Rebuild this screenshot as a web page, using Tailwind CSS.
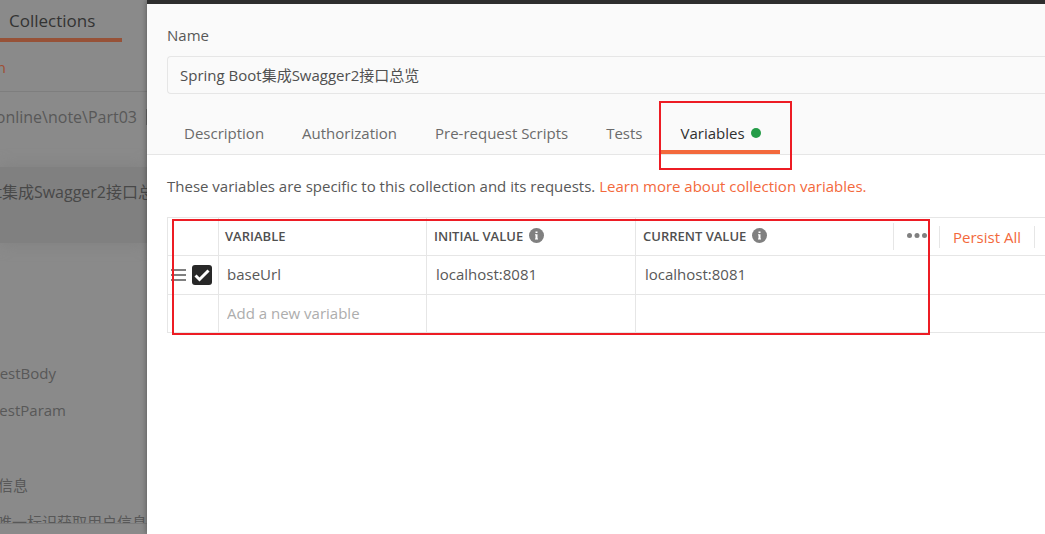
<!DOCTYPE html>
<html lang="en">
<head>
<meta charset="utf-8">
<title>Edit Collection</title>
<script src="https://cdn.jsdelivr.net/npm/@tailwindcss/browser@4"></script>
</head>
<body class="flex min-h-screen overflow-hidden bg-white font-['Open_Sans','Noto_Sans_CJK_SC',sans-serif] text-[15px] leading-5 text-[#585858]">

<aside class="flex h-screen w-[147px] shrink-0 flex-col overflow-hidden bg-[#8a8a8a] whitespace-nowrap text-[#585858]">
  <div class="flex h-[42px] shrink-0">
    <button class="w-[122px] border-b-4 border-[#975238] pt-1 pl-[9px] text-left text-[17px] text-[#333]">Collections</button>
  </div>
  <div class="flex h-[50px] shrink-0 items-center border-b border-[#7e7e7e]">
    <button class="flex w-[6px] justify-end text-[#a04f32]">Collection</button>
  </div>
  <div class="flex h-[75px] shrink-0 items-start justify-between pt-[13px]">
    <span class="flex w-[137px] justify-end text-base leading-6">online\note\Part03</span>
    <span class="mt-1 h-4 w-px bg-[#666]"></span>
  </div>
  <div class="h-[76px] shrink-0 bg-[#808080] pt-[13px] shadow-[0_0_16px_#808080]">
    <span class="flex w-[154px] justify-end text-base leading-6 text-[#484848]">Spring Boot集成Swagger2接口总</span>
  </div>
  <ul class="flex h-[281px] shrink-0 flex-col overflow-hidden border-b border-[#7b7b7b] pt-[111px]">
    <li class="flex h-[37px] w-14 shrink-0 items-center justify-end">RequestBody</li>
    <li class="mb-[38px] flex h-[37px] w-[66px] shrink-0 items-center justify-end">RequestParam</li>
    <li class="flex h-[37px] w-7 shrink-0 items-center justify-end">获取用户信息</li>
    <li class="flex h-[37px] w-[147px] shrink-0 items-center justify-end">唯一标识获取用户信息</li>
  </ul>
</aside>

<main class="relative min-w-0 flex-1 border-t-4 border-[#2e2e2e] bg-white shadow-[0_0_6px_#00000066]">
  <header class="border-b border-[#e6e6e6] bg-[#fafafa] pt-[21px]">
    <div class="pl-5">
      <label for="name" class="block">Name</label>
      <input id="name" type="text" value="Spring Boot集成Swagger2接口总览" class="mt-[11px] block h-[38px] w-full rounded-l border border-r-0 border-[#e6e6e6] bg-[#fafafa] px-3 pb-[2px] text-[#505050] outline-none">
    </div>
    <nav class="mt-[18px] flex h-[42px] pl-[18px] text-[#6b6b6b]">
      <button class="px-[19px]">Description</button>
      <button class="px-[19px]">Authorization</button>
      <button class="px-[19px]">Pre-request Scripts</button>
      <button class="px-[19px]">Tests</button>
      <button class="relative flex items-center gap-[6px] border-b-4 border-[#f3693c] px-[19px] pt-1 text-[#303030]">Variables
        <span class="size-[10px] rounded-full bg-[#249c47]"></span>
        <span class="pointer-events-none absolute -top-[11px] -left-[2px] z-10 h-[69px] w-[133px] border-2 border-[#ed1c24]"></span>
      </button>
    </nav>
  </header>

  <section class="pt-[21px] pl-5">
    <p>These variables are specific to this collection and its requests. <a href="#" class="text-[#f3693c]">Learn more about collection variables.</a></p>
    <div class="relative mt-[21px]">
      <table class="w-full table-fixed border-collapse border border-r-0 border-[#e6e6e6]">
        <colgroup><col class="w-[51px]"><col class="w-[208px]"><col class="w-[209px]"><col></colgroup>
        <thead>
          <tr class="h-[38px] text-left text-[13px] text-[#505050]">
            <th class="border border-[#e6e6e6]"><span class="sr-only">Enabled</span></th>
            <th class="border border-[#e6e6e6] px-[6px] pb-[2px] font-semibold">VARIABLE</th>
            <th class="border border-[#e6e6e6] px-[7px] pb-[2px] font-semibold">
              <span class="flex items-center gap-[6px]">INITIAL VALUE
                <svg class="size-[15px]" viewBox="0 0 15 15"><circle cx="7.500" cy="7.500" r="7.500" fill="#808080"/><path d="M6.500 3.500h2v1.500h-2zM6 6.200h2.500v4.300H9v1H6v-1h.5V7.200H6z" fill="#fff"/></svg>
              </span>
            </th>
            <th class="border-y border-[#e6e6e6] pl-[7px] font-semibold">
              <div class="flex items-center">
                <span class="flex flex-1 items-center gap-[6px] pb-[2px]">CURRENT VALUE
                  <svg class="size-[15px]" viewBox="0 0 15 15"><circle cx="7.500" cy="7.500" r="7.500" fill="#808080"/><path d="M6.500 3.500h2v1.500h-2zM6 6.200h2.500v4.300H9v1H6v-1h.5V7.200H6z" fill="#fff"/></svg>
                </span>
                <button aria-label="More actions" class="flex h-[27px] w-[46px] items-center border-l border-[#e6e6e6] pb-[2px] pl-3">
                  <svg class="h-[5px] w-[22px]" viewBox="0 0 22 5" fill="#808080"><circle cx="3.500" cy="2.500" r="2.500"/><circle cx="11" cy="2.500" r="2.500"/><circle cx="18.500" cy="2.500" r="2.500"/></svg>
                </button>
                <button class="mr-[10px] h-[22px] border-x border-[#e6e6e6] px-[13px] text-[15px] font-normal whitespace-nowrap text-[#f3693c]">Persist All</button>
              </div>
            </th>
          </tr>
        </thead>
        <tbody>
          <tr class="h-[39px]">
            <td class="border border-[#e6e6e6] pl-[3px]">
              <div class="flex items-center gap-[6px]">
                <svg class="h-3 w-[15px]" viewBox="0 0 15 12" fill="#808080"><path d="M0 0h15v2H0zM0 5h15v2H0zM0 10h15v2H0z"/></svg>
                <label class="relative flex size-5">
                  <input type="checkbox" checked aria-label="Enable baseUrl" class="size-5 appearance-none rounded-[3px] bg-[#282828]">
                  <svg class="pointer-events-none absolute inset-0 size-5" viewBox="0 0 20 20" fill="none" stroke="#fff" stroke-width="3"><path d="M3.500 10.500l4 4L16.500 5.500"/></svg>
                </label>
              </div>
            </td>
            <td class="border border-[#e6e6e6] px-2 pb-[2px]">baseUrl</td>
            <td class="border border-[#e6e6e6] px-[9px] pb-[2px]">localhost:8081</td>
            <td class="border-y border-[#e6e6e6] px-[9px] pb-[2px]">localhost:8081</td>
          </tr>
          <tr class="h-[38px]">
            <td class="border border-[#e6e6e6]"></td>
            <td class="border border-[#e6e6e6] px-2 pb-[2px]"><input type="text" aria-label="Add a new variable" placeholder="Add a new variable" class="block w-full outline-none placeholder:text-[#adadad]"></td>
            <td class="border border-[#e6e6e6]"></td>
            <td class="border-y border-[#e6e6e6]"></td>
          </tr>
        </tbody>
      </table>
      <div class="pointer-events-none absolute top-[2px] left-[5px] h-[116px] w-[758px] border-2 border-[#ed1c24]"></div>
    </div>
  </section>
</main>
</body>
</html>
